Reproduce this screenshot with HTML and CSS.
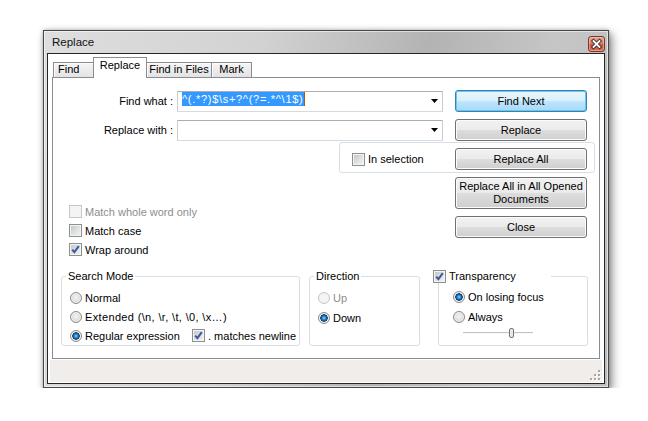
FILE: index.html
```html
<!DOCTYPE html>
<html>
<head>
<meta charset="utf-8">
<title>Replace</title>
<link rel="stylesheet" href="styles.css">
</head>
<body>
<div class="window">
  <div class="titlebar">
    <span class="title">Replace</span>
    <span class="close"><svg width="15" height="14" viewBox="0 0 15 14"><path d="M4.5 4 L10.5 10 M10.5 4 L4.5 10" stroke="#3b2a27" stroke-width="3.6" stroke-linecap="square"/><path d="M4.5 4 L10.5 10 M10.5 4 L4.5 10" stroke="#fff" stroke-width="1.8" stroke-linecap="square"/></svg></span>
  </div>
  <div class="client">
    <div class="tabs">
      <div class="tab t-find">Find</div>
      <div class="tab tab-active t-replace">Replace</div>
      <div class="tab t-files">Find in Files</div>
      <div class="tab t-mark">Mark</div>
    </div>
    <div class="panel">
      <div class="row">
        <label class="flabel">Find what :</label>
        <div class="combo"><span class="sel">^(.*?)$\s+?^(?=.*^\1$)</span><span class="caret"></span><svg class="arrow" width="7" height="4" viewBox="0 0 7 4"><path d="M0 0 H7 L3.5 4 Z" fill="#000"/></svg></div>
        <button class="btn btn-default">Find Next</button>
      </div>
      <div class="row row2">
        <label class="flabel">Replace with :</label>
        <div class="combo"><svg class="arrow" width="7" height="4" viewBox="0 0 7 4"><path d="M0 0 H7 L3.5 4 Z" fill="#000"/></svg></div>
        <button class="btn">Replace</button>
      </div>
      <div class="selbox">
        <label class="check sel-check"><span class="cb"></span>In selection</label>
        <button class="btn sel-btn">Replace All</button>
      </div>
      <div class="lower">
        <div class="options">
          <label class="check disabled"><span class="cb"></span>Match whole word only</label>
          <label class="check"><span class="cb"></span>Match case</label>
          <label class="check"><span class="cb"><svg class="tick" width="11" height="11" viewBox="0 0 11 11"><path d="M2.2 5.6 L4.4 8.2 L8.8 2.2" fill="none" stroke="#3b5a99" stroke-width="2"/></svg></span>Wrap around</label>
        </div>
        <div class="btncol">
          <button class="btn btn-tall">Replace All in All Opened<br>Documents</button>
          <button class="btn">Close</button>
        </div>
      </div>
      <div class="groups">
        <fieldset class="group g-mode">
          <legend>Search Mode</legend>
          <div class="ginner mode-inner">
            <label class="radio-row"><span class="rb"></span>Normal</label>
            <label class="radio-row"><span class="rb"></span><span class="wide">Extended (\n, \r, \t, \0, \x…)</span></label>
            <div class="radio-row">
              <label class="regex"><span class="rb on"></span>Regular expression</label>
              <label class="check"><span class="cb"><svg class="tick" width="11" height="11" viewBox="0 0 11 11"><path d="M2.2 5.6 L4.4 8.2 L8.8 2.2" fill="none" stroke="#3b5a99" stroke-width="2"/></svg></span>. matches newline</label>
            </div>
          </div>
        </fieldset>
        <fieldset class="group g-dir">
          <legend>Direction</legend>
          <div class="ginner dir-inner">
            <label class="radio-row dir-row disabled"><span class="rb"></span>Up</label>
            <label class="radio-row dir-row"><span class="rb on"></span>Down</label>
          </div>
        </fieldset>
        <fieldset class="group g-trans">
          <legend><label class="check trans-check"><span class="cb"><svg class="tick" width="11" height="11" viewBox="0 0 11 11"><path d="M2.2 5.6 L4.4 8.2 L8.8 2.2" fill="none" stroke="#3b5a99" stroke-width="2"/></svg></span>Transparency</label></legend>
          <div class="ginner trans-inner">
            <label class="radio-row trans-row"><span class="rb on"></span>On losing focus</label>
            <label class="radio-row trans-row"><span class="rb"></span>Always</label>
            <svg class="slider" width="70" height="12" viewBox="0 0 70 12">
              <rect x="0" y="5" width="70" height="1" fill="#c3c3c3"/>
              <rect x="0" y="6" width="70" height="1" fill="#f7f7f7"/>
              <rect x="46.5" y="1.5" width="4" height="9" rx="1.5" fill="#e9e9e9" stroke="#767676"/>
            </svg>
          </div>
        </fieldset>
      </div>
    </div>
    <div class="statusbar">
      <svg class="grip" width="11" height="11" viewBox="0 0 11 11">
        <g fill="#fff"><rect x="9" y="1" width="2" height="2"/><rect x="9" y="5" width="2" height="2"/><rect x="5" y="5" width="2" height="2"/><rect x="9" y="9" width="2" height="2"/><rect x="5" y="9" width="2" height="2"/><rect x="1" y="9" width="2" height="2"/></g>
        <g fill="#a8a5a2"><rect x="8" y="0" width="2" height="2"/><rect x="8" y="4" width="2" height="2"/><rect x="4" y="4" width="2" height="2"/><rect x="8" y="8" width="2" height="2"/><rect x="4" y="8" width="2" height="2"/><rect x="0" y="8" width="2" height="2"/></g>
      </svg>
    </div>
  </div>
</div>
</body>
</html>
```

FILE: styles.css
```css
html, body {
  margin: 0;
  background: #fff;
}
body {
  padding: 30px 0 0 43px;
  font-family: "Liberation Sans", Arial, sans-serif;
  font-size: 11px;
  color: #000;
}
.window {
  width: 566px;
  height: 358px;
  box-sizing: border-box;
  border: 1px solid #474747;
  padding: 0 3px 3px 3px;
  background: linear-gradient(100deg, #dedede 0%, #d2d2d2 35%, #b3b3b3 62%, #c6c6c6 82%, #bdbdbd 100%);
  box-shadow: 3px 4px 9px rgba(0,0,0,0.45), 0 0 4px rgba(0,0,0,0.25), inset 0 0 0 1px rgba(255,255,255,0.55);
}
.titlebar {
  height: 22px;
  display: flex;
  align-items: flex-start;
  padding-left: 5px;
}
.title {
  font-size: 11.5px;
  line-height: 22px;
  color: #111;
}
.close {
  margin-left: auto;
  margin-top: 5px;
  width: 17px;
  height: 16px;
  box-sizing: border-box;
  border: 1px solid #7a3828;
  border-radius: 3px;
  background: linear-gradient(#e8a593 0%, #d98068 45%, #c9523a 55%, #d67258 100%);
  box-shadow: inset 0 0 0 1px rgba(255,210,200,0.45);
  display: flex;
  align-items: center;
  justify-content: center;
}
.close svg { display: block; }
.client {
  height: 331px;
  box-sizing: border-box;
  border: 1px solid #262626;
  background: #fff;
}
.tabs {
  height: 23px;
  display: flex;
  align-items: flex-end;
  padding-left: 5px;
}
.tab {
  box-sizing: border-box;
  height: 15px;
  border: 1px solid #898c95;
  border-bottom: none;
  background: linear-gradient(#f5f5f5, #e3e3e3);
  box-shadow: inset 1px 1px 0 #fcfcfc;
  line-height: 12px;
  text-align: center;
  white-space: nowrap;
}
.t-find { width: 41px; text-align: left; padding-left: 4px; }
.t-replace { width: 54px; margin-left: -1px; }
.t-files { width: 66px; margin-left: -1px; }
.t-mark { width: 41px; margin-left: -1px; }
.tab-active {
  position: relative;
  z-index: 1;
  height: 21px;
  margin-bottom: -1px;
  background: #fff;
  box-shadow: none;
  padding-top: 1px;
  line-height: 13px;
}
.panel {
  margin-left: 4px;
  width: 548px;
  height: 282px;
  box-sizing: border-box;
  border: 1px solid #898c95;
  padding-top: 12px;
}
.row {
  display: flex;
  align-items: center;
  height: 22px;
}
.row2 { margin-top: 7px; }
.flabel {
  width: 120px;
  margin-right: 4px;
  text-align: right;
  white-space: nowrap;
}
.combo {
  width: 266px;
  height: 21px;
  box-sizing: border-box;
  border: 1px solid #abadb3;
  border-color: #abadb3 #c8cbd2 #d6dae1 #c8cbd2;
  display: flex;
  align-items: flex-start;
  padding-left: 4px;
}
.sel {
  background: #3399ff;
  color: #fff;
  line-height: 14px;
  letter-spacing: 0.7px;
  padding-right: 1px;
  white-space: nowrap;
}
.caret {
  width: 1px;
  height: 14px;
  background: #a85a10;
}
.arrow {
  display: block;
  margin-left: auto;
  margin-right: 4px;
  margin-top: 7px;
}
.btn {
  font: inherit;
  color: #000;
  width: 132px;
  height: 22px;
  box-sizing: border-box;
  padding: 0;
  margin: 0;
  border: 1px solid #707070;
  border-radius: 3px;
  background: linear-gradient(#f2f2f2 0%, #ebebeb 48%, #dddddd 52%, #cfcfcf 100%);
  box-shadow: inset 0 0 0 1px #fbfbfb;
  line-height: 13px;
  flex: none;
}
.row .btn { margin-left: 12px; }
.btn-default {
  border-color: #3c7fb1;
  background: linear-gradient(#eaf6fd 0%, #d9f0fc 48%, #bee6fd 52%, #a7d9f5 100%);
  box-shadow: inset 0 0 0 1px #63c9f0;
}
.btn-tall { height: 32px; }
.selbox {
  margin-left: 286px;
  margin-top: 1px;
  width: 256px;
  height: 31px;
  box-sizing: border-box;
  border: 1px solid #d5dfe5;
  border-radius: 3px;
  padding: 5px 0 0 12px;
  display: flex;
  align-items: flex-start;
}
.check {
  display: flex;
  align-items: center;
  white-space: nowrap;
}
.sel-check {
  width: 103px;
  flex: none;
  height: 22px;
}
.cb {
  width: 13px;
  height: 13px;
  box-sizing: border-box;
  border: 1px solid #8e8f8f;
  background: linear-gradient(135deg, #bfc3c8 0%, #dfe1e3 55%, #f4f4f4 100%);
  box-shadow: inset 0 0 0 1px #f4f4f4;
  margin-right: 3px;
  flex: none;
  display: flex;
  align-items: center;
  justify-content: center;
}
.tick { display: block; }
.disabled { color: #8d8d8d; }
.disabled .cb {
  border-color: #c7c7c7;
  background: #f4f4f4;
}
.lower {
  display: flex;
  margin-top: 4px;
}
.options {
  width: 386px;
  padding: 25px 0 0 16px;
}
.options .check { height: 19px; }
.btncol {
  display: flex;
  flex-direction: column;
  gap: 7px;
}
.groups {
  display: flex;
  margin: 11px 0 0 8px;
}
.group {
  margin: 0;
  padding: 0;
  min-width: 0;
  height: 76px;
  box-sizing: border-box;
  border: 1px solid #d5dfe5;
  border-radius: 3px;
}
.group legend {
  padding: 0 2px;
  margin-left: 4px;
  line-height: 13px;
}
.g-mode { width: 239px; }
.g-dir { width: 111px; margin-left: 9px; }
.g-trans { width: 150px; margin-left: 18px; }
.g-trans legend {
  margin-left: -6px;
  padding: 0;
}
.trans-check { width: 118px; }
.ginner { padding-top: 5px; }
.mode-inner { padding-left: 8px; }
.dir-inner { padding-left: 8px; }
.trans-inner { padding-left: 14px; padding-top: 4px; }
.radio-row {
  display: flex;
  align-items: center;
  height: 19px;
  white-space: nowrap;
}
.wide { letter-spacing: 0.35px; }
.dir-row, .trans-row { height: 20px; }
.regex {
  display: flex;
  align-items: center;
  width: 122px;
}
.rb {
  width: 12px;
  height: 12px;
  box-sizing: border-box;
  border-radius: 50%;
  border: 1px solid #8a8a8a;
  background: radial-gradient(circle at 50% 45%, #f4f4f4 0, #e2e2e2 45%, #c9c9c9 100%);
  box-shadow: inset 0 0 0 1px #f6f6f6;
  margin-right: 3px;
  flex: none;
}
.rb.on {
  background: radial-gradient(circle at 50% 50%, #8fdcff 0, #2a8fd6 1.6px, #0e4f91 3px, #1c3f66 3.6px, #eef0f2 4px, #d6d6d6 100%);
}
.disabled .rb {
  border-color: #c5c5c5;
  background: #f4f4f4;
  box-shadow: none;
}
.slider {
  display: block;
  margin-left: 10px;
}
.statusbar {
  margin: 1px 2px 1px 2px;
  height: 22px;
  background: #f0edeb;
  display: flex;
  justify-content: flex-end;
  align-items: flex-end;
}
.grip {
  display: block;
  margin: 0 1px 1px 0;
}
```
